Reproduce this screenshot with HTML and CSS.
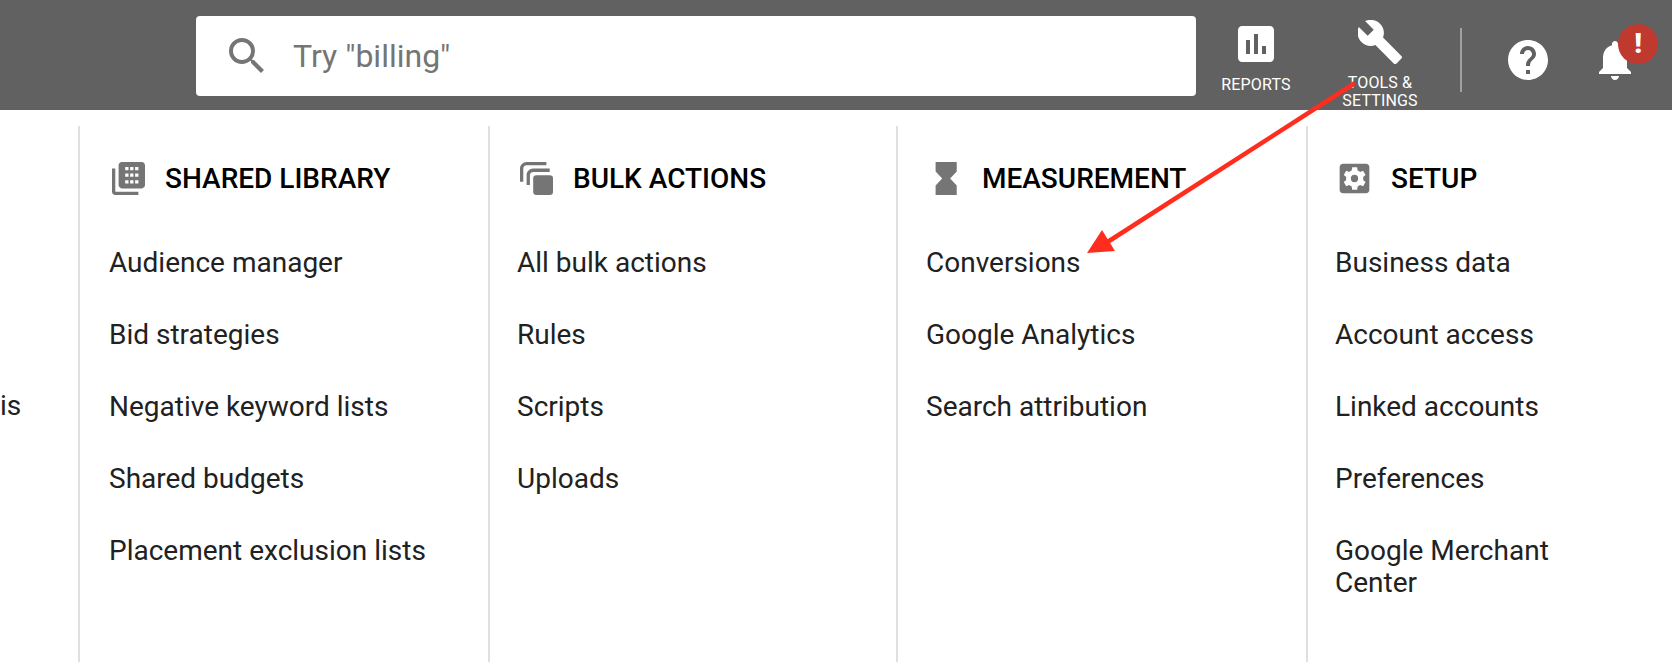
FILE: index.html
```html
<!DOCTYPE html>
<html lang="en">
<head>
    <meta charset="UTF-8">
    <title>Tools and settings</title>
    <link rel="stylesheet" href="styles.css">
</head>
<body>

<header class="topbar">
    <div class="search">
        <svg class="search-icon" viewBox="0 0 24 24"><path d="M15.5 14h-.79l-.28-.27A6.47 6.47 0 0 0 16 9.5 6.5 6.5 0 1 0 9.5 16c1.61 0 3.09-.59 4.23-1.57l.27.28v.79l5 4.99L20.49 19l-4.99-5zm-6 0C7.01 14 5 11.99 5 9.5S7.01 5 9.5 5 14 7.01 14 9.5 11.99 14 9.5 14z"/></svg>
        <span class="search-hint">Try "billing"</span>
    </div>
    <div class="tool tool-reports">
        <svg class="tool-icon" viewBox="3 3 18 18"><path d="M19 3H5c-1.1 0-2 .9-2 2v14c0 1.1.9 2 2 2h14c1.1 0 2-.9 2-2V5c0-1.1-.9-2-2-2zM9 17H7v-7h2v7zm4 0h-2V7h2v10zm4 0h-2v-4h2v4z"/></svg>
        <span class="tool-label">REPORTS</span>
    </div>
    <div class="tool tool-wrench">
        <svg class="tool-icon wrench" viewBox="1.2 1.2 21.8 21.8"><path d="M22.7 19l-9.1-9.1c.9-2.3.4-5-1.5-6.9-2-2-5-2.4-7.4-1.3L9 6 6 9 1.600 4.700C.4 7.100.9 10.100 2.900 12.100c1.900 1.900 4.600 2.400 6.900 1.500l9.100 9.100c.4.400 1 .4 1.400 0l2.300-2.300c.5-.4.5-1.100.1-1.400z"/></svg>
        <span class="tool-label">TOOLS &amp;<br>SETTINGS</span>
    </div>
    <div class="bar-divider"></div>
    <svg class="help" viewBox="2 2 20 20"><path d="M12 2C6.48 2 2 6.48 2 12s4.48 10 10 10 10-4.48 10-10S17.520 2 12 2zm1 17h-2v-2h2v2zm2.070-7.750l-.9.920C13.450 12.900 13 13.500 13 15h-2v-.5c0-1.100.45-2.100 1.170-2.830l1.240-1.260c.37-.36.59-.86.59-1.410 0-1.100-.9-2-2-2s-2 .9-2 2H8c0-2.210 1.790-4 4-4s4 1.790 4 4c0 .88-.36 1.680-.93 2.250z"/></svg>
    <div class="bell-wrap">
        <svg class="bell" viewBox="4 2 16 20"><path d="M12 22c1.100 0 2-.9 2-2h-4c0 1.100.9 2 2 2zm6-6v-5c0-3.070-1.630-5.640-4.500-6.320V4c0-.83-.67-1.500-1.500-1.500s-1.500.67-1.500 1.500v.68C7.640 5.360 6 7.920 6 11v5l-2 2v1h16v-1l-2-2z"/></svg>
        <span class="alert">!</span>
    </div>
</header>

<main class="menu">
    <section class="col col-cut">
        <ul class="links">
            <li>&nbsp;</li>
            <li>&nbsp;</li>
            <li>is</li>
        </ul>
    </section>

    <section class="col">
        <h2 class="col-title">
            <svg class="col-icon" viewBox="2 2 20 20"><path d="M4 6H2v14c0 1.100.9 2 2 2h14v-2H4V6z"/><path fill-rule="evenodd" d="M20 2H8c-1.100 0-2 .9-2 2v12c0 1.100.9 2 2 2h12c1.100 0 2-.9 2-2V4c0-1.100-.9-2-2-2zM10 5h2v2h-2zM13 5h2v2h-2zM16 5h2v2h-2zM10 9h2v2h-2zM13 9h2v2h-2zM16 9h2v2h-2zM10 13h2v2h-2zM13 13h2v2h-2zM16 13h2v2h-2z"/></svg>
            SHARED LIBRARY
        </h2>
        <ul class="links">
            <li>Audience manager</li>
            <li>Bid strategies</li>
            <li>Negative keyword lists</li>
            <li>Shared budgets</li>
            <li>Placement exclusion lists</li>
        </ul>
    </section>

    <section class="col">
        <h2 class="col-title">
            <svg class="col-icon" viewBox="2 2 20 20"><path d="M2 6c0-2.200 1.800-4 4-4h12v2H6c-1.100 0-2 .9-2 2v8H2V6z"/><path d="M6 10c0-2.200 1.800-4 4-4h10v2H10c-1.100 0-2 .9-2 2v6H6v-6z"/><rect x="10" y="10" width="12" height="12" rx="2"/></svg>
            BULK ACTIONS
        </h2>
        <ul class="links">
            <li>All bulk actions</li>
            <li>Rules</li>
            <li>Scripts</li>
            <li>Uploads</li>
        </ul>
    </section>

    <section class="col">
        <h2 class="col-title">
            <svg class="col-icon" viewBox="2 2 20 20"><path d="M6 2h12.800v5.700l-4 4.300 4 4.300V22H6v-5.700l4-4.300-4-4.300z"/></svg>
            MEASUREMENT
        </h2>
        <ul class="links">
            <li>Conversions</li>
            <li>Google Analytics</li>
            <li>Search attribution</li>
        </ul>
    </section>

    <section class="col">
        <h2 class="col-title">
            <svg class="col-icon" viewBox="2 2 20 20"><path fill-rule="evenodd" d="M19 3H5c-1.100 0-2 .9-2 2v14c0 1.100.9 2 2 2h14c1.100 0 2-.9 2-2V5c0-1.100-.9-2-2-2zM17.300 12c0 .3 0 .6-.1.900l1.500 1.200-1.500 2.600-1.800-.7c-.5.400-1 .7-1.500.9l-.3 1.900h-3l-.3-1.900c-.6-.2-1.100-.5-1.500-.9l-1.800.7-1.500-2.600 1.500-1.200c0-.3-.1-.6-.1-.9s0-.6.1-.9L5.500 9.900 7 7.300l1.800.7c.4-.4 1-.7 1.500-.9L10.600 5.200h3l.3 1.900c.5.200 1 .5 1.500.9l1.800-.7 1.500 2.600-1.500 1.200c.1.300.1.600.1.900zM12 9.800a2.200 2.200 0 1 0 0 4.400 2.200 2.200 0 0 0 0-4.400z"/></svg>
            SETUP
        </h2>
        <ul class="links">
            <li>Business data</li>
            <li>Account access</li>
            <li>Linked accounts</li>
            <li>Preferences</li>
            <li>Google Merchant<br>Center</li>
        </ul>
    </section>
</main>

<!-- annotation drawn over the screenshot -->
<svg class="arrow" viewBox="0 0 1672 670"><path d="M1355 83L1106 243" stroke="#ff2d1e" stroke-width="4.500" fill="none"/><path d="M1087 253L1102 230L1115 251z" fill="#ff2d1e"/></svg>

</body>
</html>
```

FILE: styles.css
```css
html, body, ul, li, h2 {
    margin: 0;
    padding: 0;
}
body {
    width: 1672px;
    height: 670px;
    position: relative;
    overflow: hidden;
    background-color: #fff;
    font-family: Roboto, "Liberation Sans", sans-serif;
}
ul {
    list-style-type: none;
}

/* top bar */
.topbar {
    height: 110px;
    padding-left: 196px;
    display: flex;
    background-color: #616161;
}
.search {
    width: 1000px;
    height: 80px;
    margin-top: 16px;
    padding-left: 27px;
    box-sizing: border-box;
    display: flex;
    align-items: center;
    background-color: #fff;
    border-radius: 4px;
}
.search-icon {
    width: 48px;
    height: 48px;
    fill: #757575;
}
.search-hint {
    margin-left: 22px;
    font-size: 32px;
    color: #757575;
}
.tool {
    display: flex;
    flex-direction: column;
    align-items: center;
    color: #fff;
}
.tool-reports {
    width: 100px;
    margin-left: 10px;
}
.tool-wrench {
    width: 120px;
    margin-left: 14px;
}
.tool-icon {
    width: 36px;
    height: 36px;
    margin-top: 26px;
    fill: #fff;
}
.wrench {
    width: 44px;
    height: 44px;
    margin-top: 20px;
}
.tool-label {
    margin-top: 14px;
    font-size: 16px;
    letter-spacing: .15px;
    line-height: 18px;
    text-align: center;
}
.wrench + .tool-label {
    margin-top: 10px;
}
.bar-divider {
    width: 2px;
    height: 64px;
    margin: 28px 0 0 20px;
    background-color: #a0a0a0;
}
.help {
    width: 40px;
    height: 40px;
    margin: 40px 0 0 46px;
    fill: #fff;
}
.bell-wrap {
    position: relative;
    margin: 40px 0 0 50px;
}
.bell {
    display: block;
    width: 34px;
    height: 40px;
    fill: #fff;
}
.alert {
    position: absolute;
    left: 20px;
    top: -16px;
    width: 40px;
    height: 40px;
    border-radius: 50%;
    background-color: #c0392f;
    color: #fff;
    font-size: 28px;
    font-weight: 900;
    line-height: 40px;
    text-align: center;
}

/* menu columns */
.menu {
    display: grid;
    grid-template-columns: 78px 410px 408px 410px 409px;
    height: 536px;
    margin-top: 16px;
}
.col {
    padding-left: 28px;
    border-left: 2px solid #e0e0e0;
}
.col:nth-child(2) {
    padding-left: 29px;
}
.col:nth-child(3), .col:nth-child(5) {
    padding-left: 27px;
}
.col-cut {
    padding-left: 0;
    border-left: 0;
}
.col-cut .links {
    margin-top: 120px;
}
.col-title {
    height: 76px;
    padding: 29px 0 0 3px;
    box-sizing: border-box;
    display: flex;
    align-items: center;
    gap: 20px;
    font-size: 28px;
    font-weight: 500;
    color: #000;
}
.col-icon {
    width: 33px;
    height: 33px;
    fill: #757575;
}
.links {
    margin-top: 45px;
    font-size: 28px;
    line-height: 32px;
    color: #212121;
}
.links li {
    margin-bottom: 40px;
}

.arrow {
    position: absolute;
    left: 0;
    top: 0;
    width: 1672px;
    height: 670px;
    pointer-events: none;
}
```
